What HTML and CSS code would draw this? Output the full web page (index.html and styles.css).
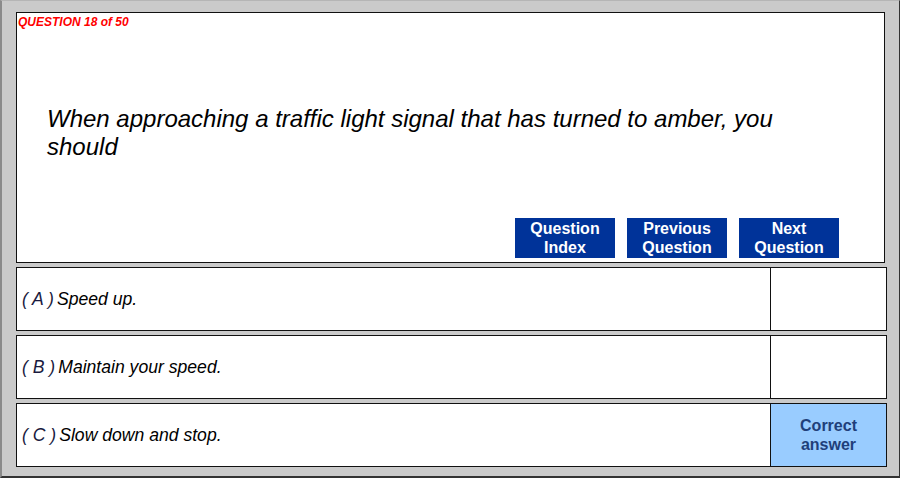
FILE: index.html
```html
<!DOCTYPE html>
<html lang="en">
<head>
    <meta charset="UTF-8">
    <title>Question 18 of 50</title>
    <link rel="stylesheet" href="styles.css">
</head>
<body>
    <div class="frame">
        <!-- Question panel -->
        <div class="question-box">
            <div class="counter">QUESTION 18 of 50</div>
            <p class="question-text">When approaching a traffic light signal that has turned to amber, you should</p>
            <div class="nav">
                <button class="nav-btn">Question<br>Index</button>
                <button class="nav-btn">Previous<br>Question</button>
                <button class="nav-btn">Next<br>Question</button>
            </div>
        </div>

        <!-- Answers -->
        <div class="answer">
            <div class="answer-text"><span class="letter">( A )</span> Speed up.</div>
            <div class="answer-mark"></div>
        </div>
        <div class="answer">
            <div class="answer-text"><span class="letter">( B )</span> Maintain your speed.</div>
            <div class="answer-mark"></div>
        </div>
        <div class="answer">
            <div class="answer-text"><span class="letter">( C )</span> Slow down and stop.</div>
            <div class="answer-mark correct">Correct<br>answer</div>
        </div>
    </div>
</body>
</html>
```

FILE: styles.css
```css
body {
    margin: 0;
    padding: 0;
    font-family: "Liberation Sans", Arial, sans-serif;
    background: #fff;
}

.frame {
    box-sizing: border-box;
    width: 900px;
    height: 478px;
    background: #cacaca;
    border-left: 2px solid #8a8a8a;
    border-top: 1px solid #b5b5b5;
    border-right: 1px solid #333;
    border-bottom: 2px solid #333;
    padding: 11px 13px 0 14px;
    display: flex;
    flex-direction: column;
    gap: 4px;
}

.question-box {
    box-sizing: border-box;
    width: 869px;
    height: 251px;
    background: #fff;
    border: 1px solid #111;
    display: flex;
    flex-direction: column;
}

.counter {
    color: #f00;
    font-size: 12px;
    font-weight: bold;
    font-style: italic;
    padding: 2px 0 0 1px;
}

.question-text {
    margin: 76px 60px 0 30px;
    font-size: 24px;
    font-style: italic;
    line-height: 28px;
    color: #000;
}

.nav {
    margin-top: auto;
    display: flex;
    justify-content: flex-end;
    gap: 12px;
    padding: 0 45px 4px 0;
}

.nav-btn {
    width: 100px;
    height: 40px;
    border: none;
    padding: 0;
    background: #003399;
    color: #fff;
    font-family: "Liberation Sans", Arial, sans-serif;
    font-size: 16px;
    font-weight: bold;
    line-height: 19px;
}

.answer {
    box-sizing: border-box;
    width: 871px;
    height: 64px;
    background: #fff;
    border: 1px solid #111;
    display: flex;
}

.answer-text {
    flex: 1;
    display: flex;
    align-items: center;
    gap: 3px;
    padding-left: 5px;
    font-size: 17.6px;
    font-style: italic;
    color: #000;
}

.letter {
    color: #1a1a40;
}

.answer-mark {
    width: 115px;
    border-left: 1px solid #111;
}

.answer-mark.correct {
    background: #99ccff;
    color: #1f3f7a;
    font-size: 16px;
    font-weight: bold;
    line-height: 19px;
    display: flex;
    align-items: center;
    justify-content: center;
    text-align: center;
}
```
